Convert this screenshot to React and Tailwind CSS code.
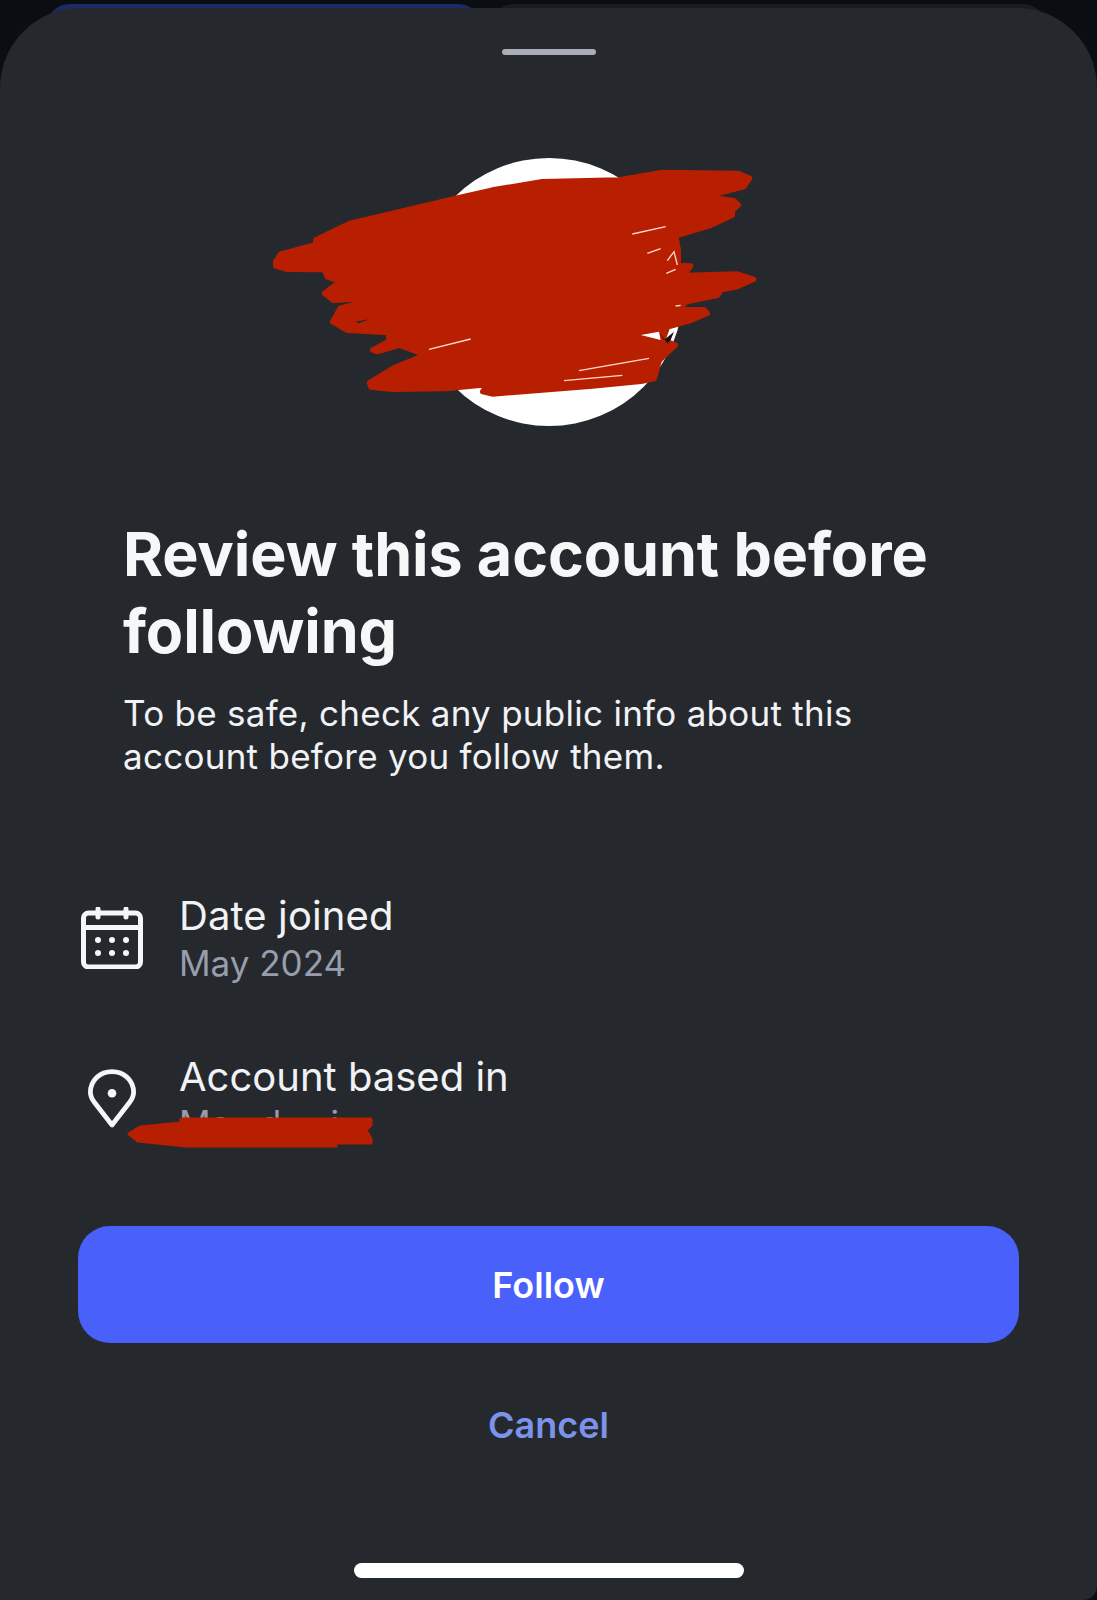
const SCRIBBLE_OUTLINE =
  "M50 365 L65 342 L170 314 L170 300 L272 250 L400 220 L590 175 L700 150 L850 125 L1080 120 L1210 97 L1435 100 L1472 115 L1455 140 L1340 170 L1425 182 L1438 195 L1420 212 L1420 226 L1350 258 L1250 288 L1258 330 L1258 376 L1295 378 L1285 392 L1225 408 L1435 402 L1484 418 L1435 440 L1386 450 L1376 466 L1280 486 L1260 509 L1335 509 L1345 520 L1296 541 L1226 561 L1211 600 L1249 615 L1201 661 L1186 716 L1146 724 L1000 738 L700 762 L671 755 L686 734 L560 746 L400 748 L336 741 L331 728 L404 684 L500 644 L420 616 L355 635 L341 630 L389 604 L389 578 L264 571 L221 545 L244 504 L324 484 L320 476 L224 481 L196 460 L244 424 L205 411 L196 389 L84 388 L50 378 Z";

function Scribble() {
  return (
    <svg viewBox="0 0 1560 900" className="absolute left-[-156px] top-[-18px] w-[520px] h-[300px]">
      <path d={SCRIBBLE_OUTLINE} fill="#b81e00" stroke="#b81e00" strokeWidth="16" strokeLinejoin="round" />
      {/* slivers of the avatar left showing through the scribble */}
      <path d="M1120 282 L1220 260 M1165 340 L1205 326 M1225 362 L1245 335 L1255 375 M1222 400 L1250 388 M1250 498 L1265 496 M510 628 L635 597 M960 692 L1170 655 M915 722 L1090 706" stroke="#ffd9d0" strokeWidth="4" fill="none" />
      <path d="M1145 585 L1200 575 L1205 600 Z" fill="#ffffff" />
      <path d="M1200 575 L1215 600 L1245 575 L1235 600 L1225 610 Z" fill="#111111" />
      <path d="M290 545 L330 538 L300 550 Z" fill="#25292e" />
    </svg>
  );
}

function CalendarIcon() {
  return (
    <svg viewBox="0 0 62 62" className="w-[62px] h-[62px]" fill="none" stroke="#f5f6f8" strokeWidth="5">
      <rect x="2.5" y="6" width="57" height="54" rx="5" />
      <path d="M2.5 20.5 H59.5" />
      <path d="M17 2 V10 M45 2 V10" strokeLinecap="round" />
      <g fill="#f5f6f8" stroke="none">
        <circle cx="17" cy="33" r="3" />
        <circle cx="31" cy="33" r="3" />
        <circle cx="45" cy="33" r="3" />
        <circle cx="17" cy="46" r="3" />
        <circle cx="31" cy="46" r="3" />
        <circle cx="45" cy="46" r="3" />
      </g>
    </svg>
  );
}

function PinIcon() {
  return (
    <svg viewBox="0 0 50 62" className="w-[48px] h-[62px]" fill="none" stroke="#f5f6f8" strokeWidth="5">
      <path d="M25 58 L7 35 C3.5 30.5 2.5 27 2.5 24 C2.5 11.5 12.5 2.5 25 2.5 C37.5 2.5 47.5 11.5 47.5 24 C47.5 27 46.5 30.5 43 35 Z" strokeLinejoin="round" />
      <circle cx="25" cy="25" r="4.5" fill="#f5f6f8" stroke="none" />
    </svg>
  );
}

export default function App() {
  return (
    <div className="h-[1600px] w-[1097px] overflow-hidden bg-[#0a0e13] font-['Inter',sans-serif]">
      {/* Cards behind the sheet */}
      <div className="flex gap-2 pt-1 pl-[46px] pr-[50px] h-[44px]">
        <div className="w-[436px] rounded-t-[24px] bg-[#1e2a63]" />
        <div className="flex-1 rounded-t-[24px] bg-[#191c21]" />
      </div>

      {/* Sheet */}
      <div className="relative mt-[-36px] h-[1592px] rounded-t-[80px] rounded-br-[14px] bg-[#25292e] flex flex-col">
        <div className="mx-auto mt-[41px] h-[6px] w-[94px] rounded-sm bg-[#a9adb8]" />

        <div className="relative mx-auto mt-[103px] h-[268px] w-[268px] rounded-full bg-white">
          <Scribble />
        </div>

        <h1 className="mt-[90px] pl-[123px] text-[61px] leading-[77px] font-bold tracking-[-0.1px] text-[#f6f7f9]">
          Review this account before<br />following
        </h1>
        <p className="mt-[22px] pl-[123px] text-[35px] leading-[43px] tracking-[0.27px] text-[#f1f2f5]">
          To be safe, check any public info about this<br />account before you follow them.
        </p>

        <div className="mt-[113px] pl-[81px] flex items-center gap-[36px]">
          <CalendarIcon />
          <div>
            <div className="text-[40px] leading-[50px] tracking-[0.1px] text-[#f1f2f5]">Date joined</div>
            <div className="text-[35px] leading-[44px] text-[#989dab]">May 2024</div>
          </div>
        </div>

        <div className="relative mt-[67px] pl-[81px] flex items-center gap-[36px]">
          <div className="w-[62px] flex justify-center">
            <PinIcon />
          </div>
          <div>
            <div className="text-[40px] leading-[50px] text-[#f1f2f5]">Account based in</div>
            <div className="-mt-[1px] text-[35px] leading-[44px] whitespace-pre text-[#989dab]">Ma   d     i</div>
          </div>
          <svg viewBox="0 0 250 32" className="absolute left-[126px] top-[64px] w-[250px] h-[32px]">
            <path d="M55 3 L245 3 L245 9 L240 14 L245 23 L245 27 L210 27 L210 30 L60 30 L12 25 L3 18 L14 11 L55 7 Z" fill="#b81e00" stroke="#b81e00" strokeWidth="3" strokeLinejoin="round" />
          </svg>
        </div>

        <button className="mt-[81px] mx-[78px] h-[117px] rounded-[32px] bg-[#4a60fb] text-[36px] font-semibold text-white">
          Follow
        </button>
        <button className="mt-[60px] text-[36px] leading-[44px] font-semibold text-[#7b93ea]">
          Cancel
        </button>

        {/* Home indicator */}
        <div className="mt-auto mb-[22px] mx-auto h-[15px] w-[390px] rounded-full bg-white" />
      </div>
    </div>
  );
}
